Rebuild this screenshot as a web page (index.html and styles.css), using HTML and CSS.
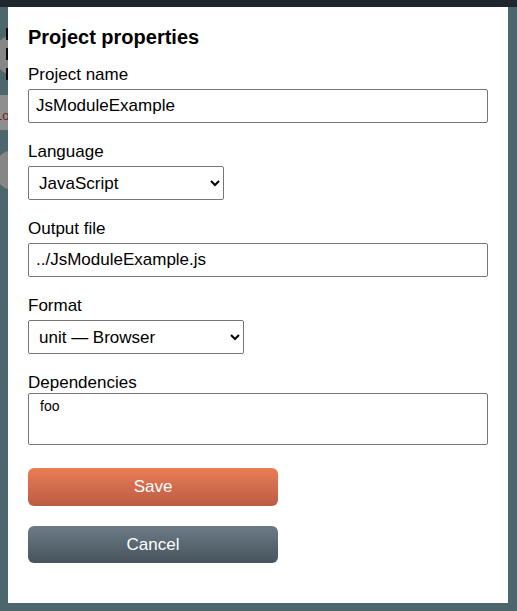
FILE: index.html
```html
<!DOCTYPE html>
<html lang="en">
<head>
    <meta charset="UTF-8">
    <meta name="viewport" content="width=device-width, initial-scale=1.0">
    <title>Project properties</title>
    <link rel="stylesheet" href="styles.css">
</head>
<body>
    <div class="topbar"></div>

    <!-- page behind the dialog -->
    <div class="backdrop">
        <span class="mark mark-1"></span>
        <span class="mark mark-2"></span>
        <span class="mark mark-3"></span>
        <span class="blob blob-1"></span>
        <div class="band"><span>Lo</span></div>
        <span class="blob blob-2"></span>
    </div>

    <div class="dialog">
        <h2>Project properties</h2>
        <form id="propertiesForm">
            <div class="form-group">
                <label for="project-name">Project name</label>
                <input type="text" id="project-name" class="field" value="JsModuleExample">
            </div>
            <div class="form-group">
                <label for="language">Language</label>
                <select id="language" class="field select-language">
                    <option>JavaScript</option>
                    <option>Kotlin</option>
                </select>
            </div>
            <div class="form-group">
                <label for="output-file">Output file</label>
                <input type="text" id="output-file" class="field" value="../JsModuleExample.js">
            </div>
            <div class="form-group">
                <label for="format">Format</label>
                <select id="format" class="field select-format">
                    <option>unit — Browser</option>
                    <option>unit — Node</option>
                </select>
            </div>
            <div class="form-group tight">
                <label for="dependencies">Dependencies</label>
                <textarea id="dependencies" class="deps">foo</textarea>
            </div>
            <button type="submit" class="btn btn-save">Save</button>
            <button type="button" class="btn btn-cancel">Cancel</button>
        </form>
    </div>
</body>
</html>
```

FILE: styles.css
```css
* {
    margin: 0;
    padding: 0;
    box-sizing: border-box;
}

body {
    font-family: 'Liberation Sans', Arial, sans-serif;
    background: #4d666d;
    min-height: 100vh;
    color: #000;
}

.topbar {
    height: 7px;
    background: #1f262d;
}

/* bits of the page peeking out on the left */
.backdrop {
    position: absolute;
    top: 0;
    left: 0;
    width: 8px;
    height: 611px;
    overflow: hidden;
}

.mark {
    position: absolute;
    left: 6px;
    width: 3px;
    height: 12px;
    background: #0b0b0b;
    z-index: 1;
}

.mark-1 { top: 28px; }
.mark-2 { top: 48px; }
.mark-3 { top: 68px; }

.blob {
    position: absolute;
    left: -6px;
    width: 40px;
    height: 40px;
    border-radius: 50%;
    background: #858787;
}

.blob-1 { top: 35px; }
.blob-2 { top: 150px; }

.band {
    position: absolute;
    top: 95px;
    left: 0;
    width: 8px;
    height: 35px;
    background: #8e8e8e;
}

.band span {
    position: absolute;
    left: -5px;
    top: 13px;
    font-size: 13px;
    color: #6e1d1d;
}

.dialog {
    width: 500px;
    height: 596px;
    margin-left: 8px;
    background: white;
    padding: 19px 20px 40px;
}

.dialog h2 {
    font-size: 20px;
    line-height: 23px;
    font-weight: bold;
    margin-bottom: 16px;
}

.form-group {
    margin-bottom: 19px;
}

.form-group label {
    display: block;
    font-size: 17px;
    line-height: 20px;
    margin-bottom: 4px;
}

.form-group.tight label {
    margin-bottom: 0;
}

.field {
    display: block;
    width: 100%;
    height: 34px;
    padding: 0 7px;
    border: 1px solid #767676;
    border-radius: 2px;
    background: white;
    font-family: inherit;
    font-size: 17px;
    color: #000;
}

select.field {
    padding: 0 4px 0 6px;
}

.select-language {
    width: 196px;
}

.select-format {
    width: 216px;
}

.deps {
    display: block;
    width: 100%;
    height: 52px;
    padding: 4px 11px;
    border: 1px solid #767676;
    border-radius: 2px;
    font-family: inherit;
    font-size: 14px;
    resize: none;
}

.btn {
    display: block;
    width: 250px;
    border: none;
    border-radius: 6px;
    color: white;
    font-family: inherit;
    font-size: 17px;
    cursor: pointer;
}

.btn-save {
    height: 38px;
    margin-top: 23px;
    background: linear-gradient(#ea7d56, #bb5b45);
}

.btn-cancel {
    height: 37px;
    margin-top: 20px;
    background: linear-gradient(#6c7c86, #47535d);
}
```
